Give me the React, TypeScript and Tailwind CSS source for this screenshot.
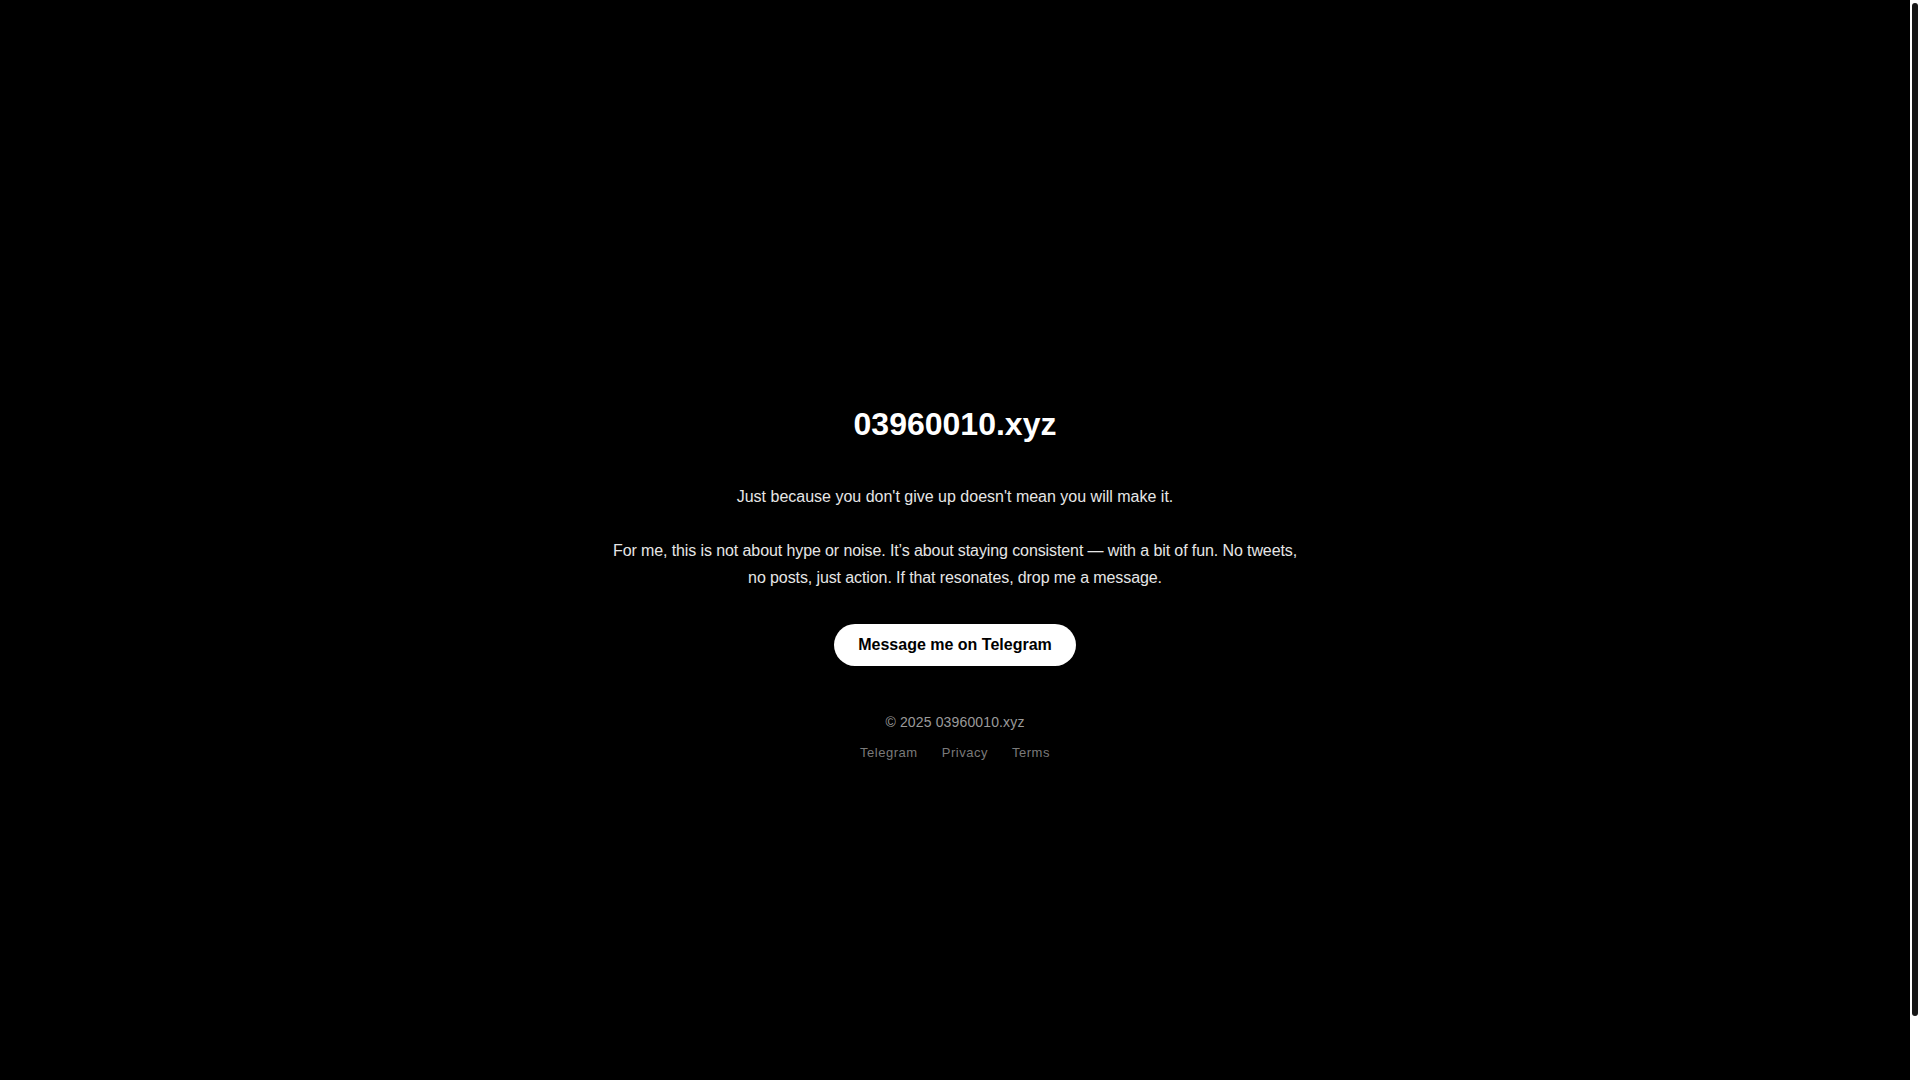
export default function App() {
  const links = ['Telegram', 'Privacy', 'Terms'];

  return (
    <div
      className="flex h-screen bg-black text-white"
      style={{ fontFamily: '"Liberation Sans", Arial, sans-serif' }}
    >
      <div className="flex-1 overflow-y-auto [scrollbar-width:none]">
        <div className="box-content min-h-[1080px] pt-[44px] pb-[30px] flex flex-col items-center justify-center px-4">
          <main className="flex flex-col items-center text-center">
            <h1 className="text-[32px] font-bold leading-[1.2] mb-10">03960010.xyz</h1>
            <p className="text-base leading-[1.7] text-[#e6e6e6] mb-7">
              Just because you don't give up doesn't mean you will make it.
            </p>
            <p className="text-base leading-[1.65] tracking-[-0.1px] text-[#e6e6e6] max-w-[700px]">
              For me, this is not about hype or noise. It’s about staying consistent — with a bit of fun. No tweets,
              no posts, just action. If that resonates, drop me a message.
            </p>
            <a
              href="#"
              className="mt-[33px] inline-block rounded-full bg-white px-6 py-[9px] text-base leading-6 font-bold text-black hover:bg-gray-200"
            >
              Message me on Telegram
            </a>
          </main>

          <footer className="mt-[46px] flex flex-col items-center">
            <div className="text-sm leading-5 tracking-[0.01em] text-[#9a9a9a]">© 2025 03960010.xyz</div>
            <nav className="mt-[11px] flex gap-6 text-[13px] leading-5 tracking-[0.04em] text-[#7a7a7a]">
              {links.map((l) => (
                <a key={l} href="#" className="hover:text-white">
                  {l}
                </a>
              ))}
            </nav>
          </footer>
        </div>
      </div>

      {/* page scrollbar */}
      <div className="w-[10px] shrink-0 bg-white px-[2px] pt-[3px]">
        <div className="h-[1013px] rounded-full bg-[#161616]" />
      </div>
    </div>
  );
}
